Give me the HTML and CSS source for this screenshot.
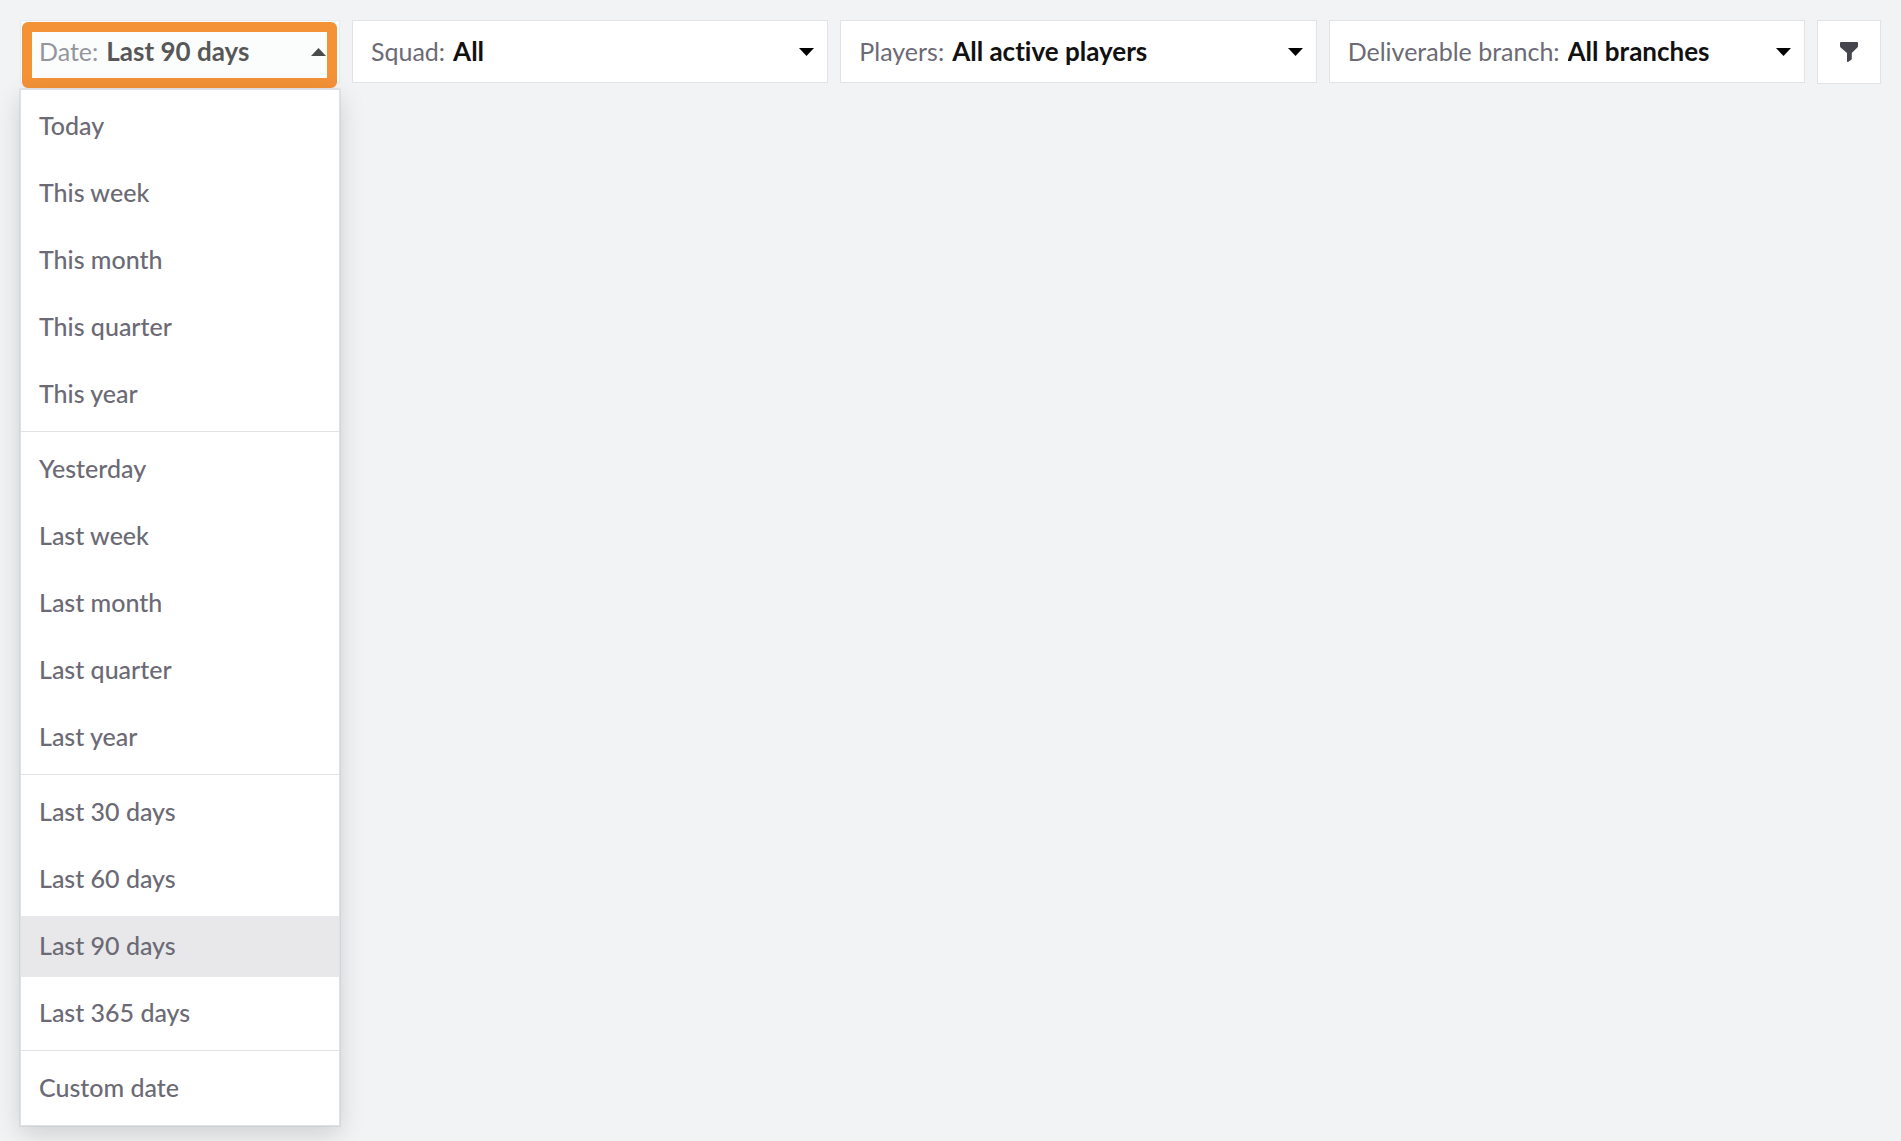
FILE: index.html
```html
<!DOCTYPE html>
<html lang="en">
<head>
  <meta charset="UTF-8" />
  <meta name="viewport" content="width=device-width, initial-scale=1.0" />
  <title>Filters</title>
  <link rel="stylesheet" href="styles.css">
</head>
<body>
  <form class="filters">
    <div class="filter-date">
      <div class="filter filter-open">
        <label for="date">Date:</label>
        <select id="date">
          <option>Today</option>
          <option>This week</option>
          <option>This month</option>
          <option>This quarter</option>
          <option>This year</option>
          <option>Yesterday</option>
          <option>Last week</option>
          <option>Last month</option>
          <option>Last quarter</option>
          <option>Last year</option>
          <option>Last 30 days</option>
          <option>Last 60 days</option>
          <option selected>Last 90 days</option>
          <option>Last 365 days</option>
          <option>Custom date</option>
        </select>
        <svg class="caret" viewBox="0 0 15 8" aria-hidden="true"><path d="M0 8L7.500 0 15 8z"/></svg>
      </div>
      <div class="highlight"></div>

      <div class="menu" id="dateMenu">
        <div class="menu-group">
          <button type="button">Today</button>
          <button type="button">This week</button>
          <button type="button">This month</button>
          <button type="button">This quarter</button>
          <button type="button">This year</button>
        </div>
        <div class="menu-group">
          <button type="button">Yesterday</button>
          <button type="button">Last week</button>
          <button type="button">Last month</button>
          <button type="button">Last quarter</button>
          <button type="button">Last year</button>
        </div>
        <div class="menu-group">
          <button type="button">Last 30 days</button>
          <button type="button">Last 60 days</button>
          <button type="button" class="selected">Last 90 days</button>
          <button type="button">Last 365 days</button>
        </div>
        <div class="menu-group">
          <button type="button">Custom date</button>
        </div>
      </div>
    </div>

    <div class="filter">
      <label for="squad">Squad:</label>
      <select id="squad">
        <option>All</option>
      </select>
      <svg class="caret" viewBox="0 0 15 8" aria-hidden="true"><path d="M0 0h15L7.500 8z"/></svg>
    </div>

    <div class="filter">
      <label for="players">Players:</label>
      <select id="players">
        <option>All active players</option>
      </select>
      <svg class="caret" viewBox="0 0 15 8" aria-hidden="true"><path d="M0 0h15L7.500 8z"/></svg>
    </div>

    <div class="filter">
      <label for="branch">Deliverable branch:</label>
      <select id="branch">
        <option>All branches</option>
      </select>
      <svg class="caret" viewBox="0 0 15 8" aria-hidden="true"><path d="M0 0h15L7.500 8z"/></svg>
    </div>

    <button type="button" class="filter-btn" aria-label="More filters">
      <svg viewBox="0 0 18 20" aria-hidden="true"><path d="M1 0h16q1 0 1 1v3q0 .9-.6 1.500L11.800 11v5.800q0 .6-.5 1L8.400 19.800q-1.400.6-1.400-.8v-8L.6 5.500Q0 4.900 0 4V1q0-1 1-1z"/></svg>
    </button>
  </form>

  <script>
    const dateSelect = document.getElementById('date');
    const items = document.querySelectorAll('#dateMenu button');

    items.forEach((item) => {
      item.addEventListener('click', () => {
        items.forEach((other) => other.classList.remove('selected'));
        item.classList.add('selected');
        dateSelect.value = item.textContent;
      });
    });
  </script>
</body>
</html>
```

FILE: styles.css
```css
* {
  box-sizing: border-box;
}
body {
  min-height: 100vh;
  background-color: #f2f3f5;
  color: #6b6a75;
  font-family: Lato, "Open Sans", sans-serif;
  font-size: 25px;
  font-variant-ligatures: none;
  margin: 0;
}
.filters {
  display: flex;
  align-items: flex-start;
  gap: 12px;
  padding: 20px;
}
.filter {
  display: flex;
  align-items: center;
  flex: 1;
  min-width: 0;
  height: 63px;
  padding: 0 13px 0 18px;
  background-color: #fff;
  border: 1px solid #e2e3e7;
}
.filter label {
  white-space: nowrap;
  margin-right: 8px;
  padding-bottom: 2px;
}
.filter select {
  flex: 1;
  min-width: 0;
  height: 100%;
  padding: 0 0 2px;
  appearance: none;
  background: none;
  border: none;
  color: #111;
  font: inherit;
  font-size: 26px;
  font-weight: 700;
  font-variant-ligatures: none;
}
.caret {
  width: 15px;
  height: 8px;
  fill: #000;
}
.filter-date {
  position: relative;
  width: 320px;
}
.filter-open {
  background-color: #fbfdfc;
  border-color: #e9eaed;
}
.filter-open label,
.filter-open select,
.filter-open .caret {
  opacity: 0.7;
}
.highlight {
  position: absolute;
  top: 2px;
  left: 2px;
  right: 3px;
  height: 66px;
  border: 10px solid #f39237;
  border-radius: 6px;
  pointer-events: none;
}
.menu {
  position: absolute;
  top: 100%;
  left: 0;
  width: 100%;
  margin-top: 6px;
  background-color: #fff;
  border: 1px solid #e0e1e4;
  box-shadow: 0 8px 24px rgba(0, 0, 0, 0.15), 0 0 0 1px rgba(0, 0, 0, 0.05);
}
.menu-group {
  display: flex;
  flex-direction: column;
  gap: 6px;
  padding: 6px 0;
}
.menu-group + .menu-group {
  padding-top: 7px;
  border-top: 1px solid #e2e2e7;
}
.menu button {
  height: 61px;
  padding: 0 18px 3px;
  background: none;
  border: none;
  color: inherit;
  font: inherit;
  font-weight: 500;
  text-align: left;
  cursor: pointer;
}
.menu button:hover,
.menu button.selected {
  background-color: #e8e8ea;
}
.filter-btn {
  display: flex;
  align-items: center;
  justify-content: center;
  width: 64px;
  height: 64px;
  padding: 0;
  background-color: #fff;
  border: 1px solid #e2e3e7;
  cursor: pointer;
}
.filter-btn svg {
  width: 18px;
  height: 20px;
  fill: #45454d;
}
```
